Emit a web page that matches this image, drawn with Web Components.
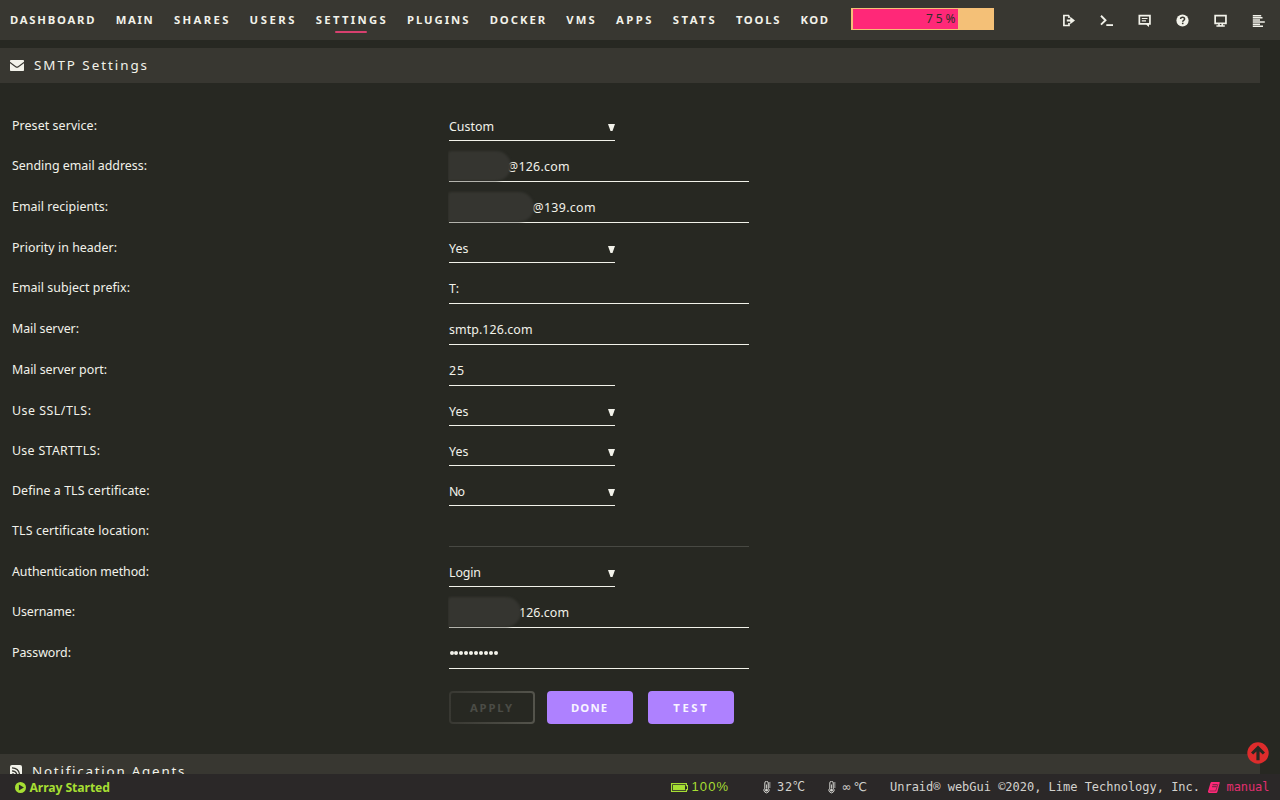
<!DOCTYPE html>
<html lang="en">
<head>
<meta charset="utf-8">
<title>SMTP Settings</title>
<style>
html,body{margin:0;height:100%;overflow:hidden;background:#272822;color:#f2f2ea;font:12.4px/18px "Noto Sans","Open Sans",sans-serif}
</style>
</head>
<body>
<settings-page></settings-page>
<script>
const define = (name, html, setup) => customElements.define(name, class extends HTMLElement {
  connectedCallback() {
    if (this.shadowRoot) return;
    const root = this.attachShadow({mode: 'open'});
    const t = document.createElement('template');
    t.innerHTML = typeof html === 'function' ? html(this) : html;
    root.append(t.content.cloneNode(true));
    if (setup) setup(this, root);
  }
});
const icons = {
  logout: '<path d="M7 1.5H1.900v10H7V9M7 1.500V4" fill="none" stroke="currentColor" stroke-width="1.700"/><path d="M4.800 5.500h3.400V2.800L13 6.500 8.200 10.200V7.500H4.800z"/>',
  terminal: '<path d="M1 1.800l4.500 4.400L1 10.600" fill="none" stroke="currentColor" stroke-width="1.900"/><path d="M6.300 10.200H13V12H6.300z"/>',
  chat: '<path fill-rule="evenodd" d="M.500.800h12.300v10h-1.800v2.200L8.300 10.800H.500zM2.200 2.500v6.500h8.900V2.500z"/><path d="M3.800 3.900h5.700v1.200H3.800zM3.800 6.200h4.200v1.200h-4.200z"/>',
  help: '<circle cx="6.500" cy="6.500" r="6.100"/><path d="M4.600 5c0-2.500 4-2.300 4 0 0 1.500-1.900 1.400-1.900 2.800" fill="none" stroke="#383731" stroke-width="1.500"/><path d="M5.900 8.700h1.600v1.500H5.900z" fill="#383731"/>',
  monitor: '<path fill-rule="evenodd" d="M.300.800h12.500v9.500H9v1h1.800v1.500H2.400v-1.500h1.800v-1H.300zM2 2.400v6h9.100v-6z"/><path d="M5.800 9.900h1.600v1.200H5.800z" fill="#383731"/>',
  log: '<path d="M.800 1h8.400v1.500H.800zM.800 3.100h9.700v1.500H.800zM.800 5.200h7.200v1.500H.800zM.800 7.300h12v1.500H.800zM.800 9.400H8v1.500H.800zM.800 11.500h10.200V13H.800z"/>',
  mail: '<path d="M0 1.800Q0 1 .800 1h12.400q.800 0 .800.800v1L8 7.200q-1 .700-2 0L0 2.800z"/><path d="M0 4.300l5.400 3.900q1.600 1.100 3.200 0L14 4.300v6.900q0 .800-.800.800H.800q-.800 0-.800-.800z"/>',
  rss: '<rect width="12" height="13" rx="2"/><g fill="none" stroke="#383731" stroke-width="1.300"><path d="M2 2.800Q9.500 3 9.700 11M2 5.800Q7 6 7 11"/></g><circle cx="3" cy="9.500" r="1.200" fill="#383731"/>',
  play: '<path fill-rule="evenodd" d="M5.500 0a5.500 5.500 0 1 0 0 11 5.500 5.500 0 0 0 0-11zM3.900 2.600L8.900 5.500 3.900 8.400z"/>',
  battery: '<path d="M.600.600h14.800v2h1.200v4h-1.200v2H.600z" fill="none" stroke="currentColor" stroke-width="1.200"/><path d="M2 2h12v5.200H2z"/>',
  thermo: '<path d="M1.800 7.200V2a1.700 1.700 0 0 1 3.400 0v5.200a2.600 2.600 0 1 1-3.400 0zM5.500 2h2M5.500 4h2M5.500 6h2" fill="none" stroke="currentColor"/><path d="M3.100 3.500h.900v4h-.900z"/><circle cx="3.500" cy="9.200" r="1.400"/>',
  book: '<path d="M3.500 0h7.700q.800.200.500 1L9.500 9.500q-.300 1.500-1.500 1.500H1Q-.500 10.500.200 8.800L2.300 1.500Q2.600.200 3.500 0z"/><path d="M4.500 2.700h4.600M4 4.700h4.600" fill="none" stroke="#2b2828" stroke-width=".7"/><path d="M1.500 9h6.200l2.300-7" fill="none" stroke="#2b2828" stroke-width=".5"/>',
  up: '<circle cx="11" cy="11" r="10.700" fill="#dd2c2c"/><path d="M11 3.400l7 7-2.200 2.200-3.200-3v8.700H9.400V9.600l-3.200 3L4 10.400z" fill="#272822"/>'
};
/* Icon from the table above; w and h are its view box. */
define('ui-icon', el => {
  const w = el.getAttribute('w') || 13, h = el.getAttribute('h') || 13;
  return `<style>:host{display:block;flex:none;width:${w}px;height:${h}px}svg{display:block}</style><svg width="${w}" height="${h}" viewBox="0 0 ${w} ${h}" fill="currentColor">${icons[el.getAttribute('name')]}</svg>`;
});
/* A one-line label whose tracking is set so that it fills its given width. */
define('ui-text', `<style>:host{display:block;white-space:pre;flex:none}span{display:inline-block}</style><span><slot></slot></span>`, (el, root) => {
  const w = +el.getAttribute('w');
  if (!w) return;
  const s = root.querySelector('span');
  const n = [...el.textContent].length;
  s.style.letterSpacing = '0px';
  const own = s.getBoundingClientRect().width;
  s.style.letterSpacing = (w - own) / Math.max(1, n - 1) + 'px';
  el.style.width = w + 'px';
});
define('usage-meter', `<style>:host{display:flex;box-sizing:border-box;width:143px;height:22px;padding:1px 2px;background:#f4c077;margin-left:23px;margin-top:8px}div{width:105px;background:#ff2878;color:#302f2a;font-size:12px;line-height:20px;display:flex;justify-content:flex-end}ui-text{margin-right:2.500px}</style><div><ui-text w="29.500">75%</ui-text></div>`);
define('nav-item', el => `<style>:host{display:flex;flex-direction:column;align-items:center;height:40px;margin-right:21.200px;font-weight:700;font-size:11.300px;line-height:40px}i{display:${el.hasAttribute('active') ? 'block' : 'none'};position:relative;left:.5px;width:32px;height:2px;background:#d8406f;border-radius:1px;margin-top:-9px}</style><ui-text w="${el.getAttribute('w')}">${el.getAttribute('label')}</ui-text><i></i>`);
const nav = [['DASHBOARD',84.500],['MAIN',37],['SHARES',54.500],['USERS',45],['SETTINGS',70],['PLUGINS',61.500],['DOCKER',55.500],['VMS',28.500],['APPS',35.500],['STATS',42],['TOOLS',43.500],['KOD',27.500]];
define('top-bar', `<style>:host{display:flex;height:40px;background:#383731;padding-left:10px;box-sizing:border-box;overflow:hidden}nav{display:flex;width:818px}.icons{display:flex;gap:25px;margin-left:68px;padding-top:14px;color:#f2f2ea}</style><nav>${nav.map(([t,w]) => `<nav-item label="${t}" w="${w}"${t === 'SETTINGS' ? ' active' : ''}></nav-item>`).join('')}</nav><usage-meter></usage-meter><div class="icons">${['logout','terminal','chat','help','monitor','log'].map(i => `<ui-icon name="${i}"></ui-icon>`).join('')}</div>`);
define('section-title', `<style>:host{display:flex;align-items:center;width:1260px;height:35px;box-sizing:border-box;padding:0 0 1px 10px;background:#383731;font-size:13.400px}::slotted(ui-text){margin-left:10px}::slotted(ui-icon){position:relative;top:.5px}</style><slot></slot>`);
define('form-row', el => {
  const type = el.getAttribute('type'), sel = type === 'select', narrow = sel || type === 'short';
  const hide = el.getAttribute('mask');
  return `<style>
:host{display:grid;grid-template-columns:437px 1fr;height:${sel ? 40 : 41}px;padding-left:12px}
.label{padding-top:16px}
.field{position:relative;display:flex;justify-content:space-between;align-items:flex-start;box-sizing:border-box;width:${narrow ? 166 : 300}px;padding-top:17px;padding-left:${el.getAttribute('indent') || 0}px;border-bottom:1px solid ${type === 'disabled' ? '#484943' : '#f2f2ea'}}
.arrow{width:7px;height:7px;background:#f2f2ea;clip-path:polygon(0 0,100% 0,64% 100%,36% 100%);margin:6px 0 0}
.mask{position:absolute;left:-1px;top:10px;width:${hide}px;height:31px;clip-path:inset(-4px -5px -4px 0)}
.mask i{display:block;height:30px;background:#353530;border-radius:3px 15px 15px 0;filter:blur(1px)}
.dots{display:flex;gap:.9px;padding:6px 0 0 .5px}.dots i{width:4px;height:4px;border-radius:50%;background:#f2f2ea}
</style><ui-text class="label" w="${el.getAttribute('lw')}">${el.getAttribute('label')}</ui-text><div class="field">${type === 'password' ? `<div class="dots">${'<i></i>'.repeat(10)}</div>` : `<ui-text w="${el.getAttribute('vw') || 0}">${el.getAttribute('value') || ''}</ui-text>`}${sel ? '<i class="arrow"></i>' : ''}${hide ? '<div class="mask"><i></i></div>' : ''}</div>`;
});
define('ui-button', el => `<style>:host{display:flex;justify-content:center;align-items:center;box-sizing:border-box;width:86px;height:33px;padding-right:2px;border-radius:4px;background:#ae81ff;color:#f8f5ff;font-weight:700;font-size:11.300px}:host([disabled]){background:linear-gradient(#272822,#272822) padding-box,linear-gradient(90deg,#383832,#54544c) border-box;border:2px solid transparent;color:#4b4c46}</style><ui-text w="${el.getAttribute('w')}">${el.getAttribute('label')}</ui-text>`);
define('status-bar', `<style>:host{display:flex;height:26px;background:#2b2828;color:#d3d2ce;font:12px/26px "DejaVu Sans Mono",monospace}
.a{display:flex;align-items:center;width:656px;padding-left:15px;color:#a6de33;font:700 12.200px/26px "Noto Sans",sans-serif;gap:3.500px}.a ui-text{padding-top:1.500px}
.b{display:flex;align-items:center;width:92px;color:#a6de33;font:13px/26px "Liberation Sans",sans-serif;gap:3.500px}
.t{display:flex;align-items:center;width:64.500px;gap:6px;font-family:"DejaVu Sans Mono","Noto Sans CJK SC",monospace}
.t.wide{font-family:"DejaVu Sans","Noto Sans CJK SC",sans-serif}
.c{display:flex;align-items:center;margin-left:-2px}.c ui-icon{margin:0 7px 0 7.500px;color:#ff2878}.m{color:#e32f70}
</style><div class="a"><ui-icon name="play" w="11" h="11"></ui-icon><ui-text w="80.500">Array Started</ui-text></div><div class="b"><ui-icon name="battery" w="17" h="9"></ui-icon><ui-text w="36.500">100%</ui-text></div><div class="t"><ui-icon name="thermo" w="8" h="13"></ui-icon><ui-text w="28">32℃</ui-text></div><div class="t wide"><ui-icon name="thermo" w="8" h="13"></ui-icon><ui-text w="25.500">∞℃</ui-text></div><div class="c"><ui-text w="310">Unraid® webGui ©2020, Lime Technology, Inc.</ui-text><ui-icon name="book" w="12" h="11"></ui-icon><ui-text class="m" w="43">manual</ui-text></div>`);
const rows = [
  ['Preset service:',85,'select','Custom',45],
  ['Sending email address:',135,'text','@126.com',62.500,58,63],
  ['Email recipients:',96,'text','@139.com',63,83.500,86],
  ['Priority in header:',105,'select','Yes',19.500],
  ['Email subject prefix:',118,'text','T:',10],
  ['Mail server:',67,'text','smtp.126.com',83.500],
  ['Mail server port:',95,'short','25',15],
  ['Use SSL/TLS:',79,'select','Yes',19.500],
  ['Use STARTTLS:',88,'select','Yes',19.500],
  ['Define a TLS certificate:',137.500,'select','No',16],
  ['TLS certificate location:',137,'disabled','',0],
  ['Authentication method:',137,'select','Login',32],
  ['Username:',63,'text','126.com',50,70,73],
  ['Password:',59,'password','',0]
];
define('settings-page', `<style>
:host{display:grid;grid-template-rows:40px 734px 26px;height:800px;position:relative;overflow:hidden}
main{padding-top:8px;overflow:hidden;box-sizing:border-box}
form{display:block;margin:0;padding-top:18px}
.buttons{display:flex;padding:22px 0 30px 449px}.buttons ui-button:nth-child(2){margin:0 15px 0 12px}
.up{position:absolute;left:1246.500px;top:742px}
</style><top-bar></top-bar><main><section-title><ui-icon name="mail" w="14" h="13"></ui-icon><ui-text w="113">SMTP Settings</ui-text></section-title><form>${rows.map(([l,lw,t,v,vw,ind,mask]) => `<form-row label="${l}" lw="${lw}" type="${t}" value="${v}" vw="${vw}"${ind ? ` indent="${ind}" mask="${mask}"` : ''}></form-row>`).join('')}</form><div class="buttons"><ui-button disabled label="APPLY" w="42"></ui-button><ui-button label="DONE" w="36"></ui-button><ui-button label="TEST" w="33.500"></ui-button></div><section-title><ui-icon name="rss" w="12" h="13"></ui-icon><ui-text w="152.500">Notification Agents</ui-text></section-title></main><status-bar></status-bar><ui-icon class="up" name="up" w="22" h="22"></ui-icon>`);
</script>
</body>
</html>
